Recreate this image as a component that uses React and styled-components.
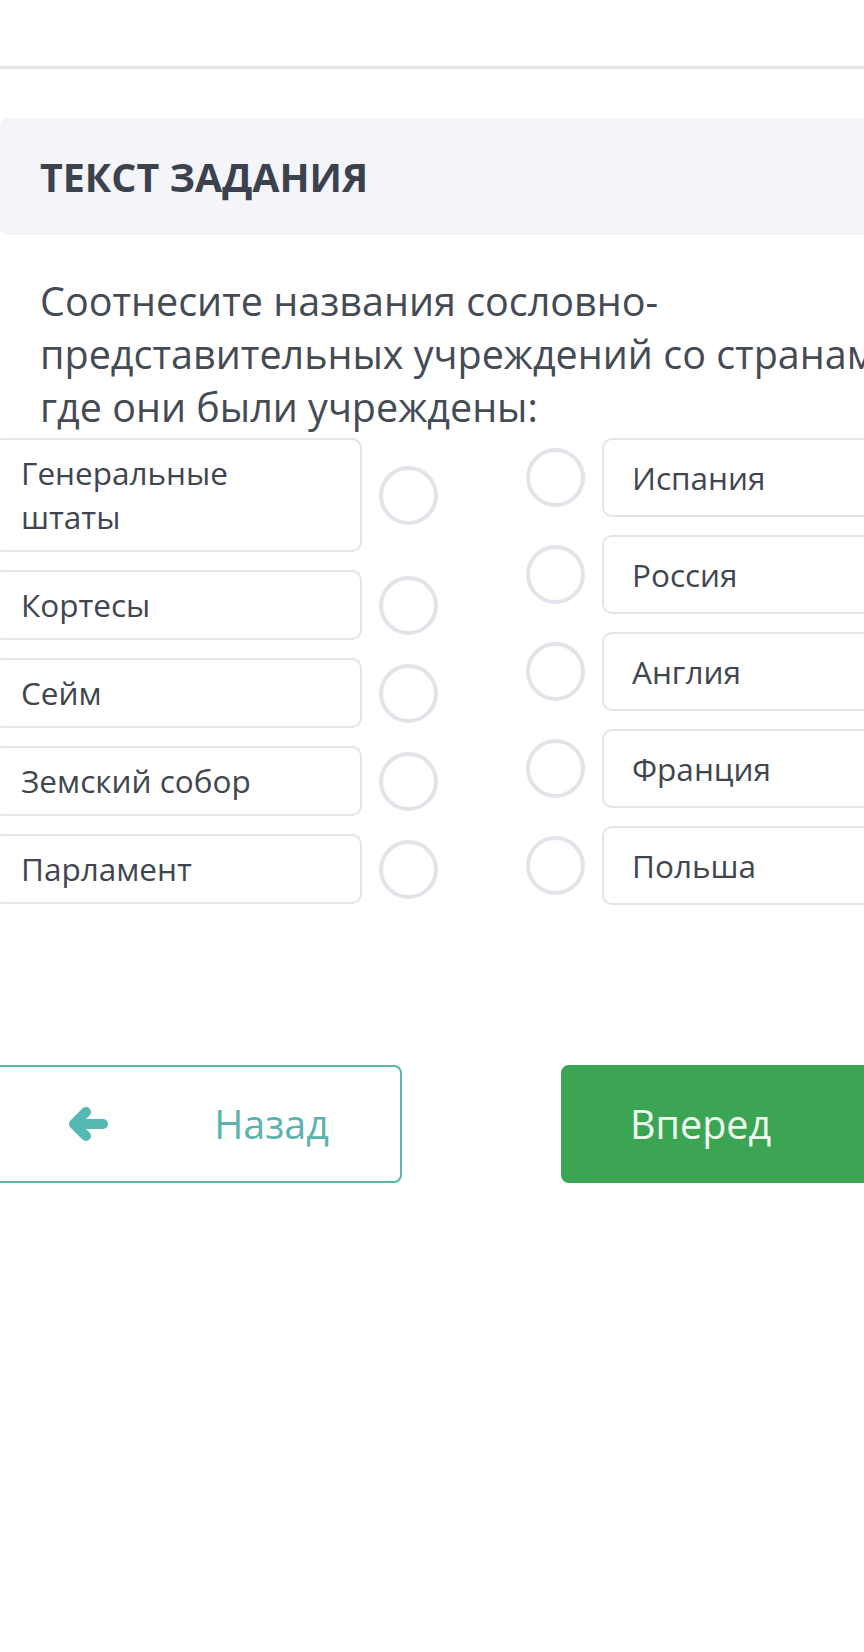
import * as React from 'react';
import styled, { createGlobalStyle } from 'styled-components';

const GlobalStyle = createGlobalStyle`
  body {
    margin: 0;
    background: #ffffff;
    font-family: "Open Sans", "Noto Sans", sans-serif;
  }
`;

const Page = styled.div`
  width: 864px;
  height: 1652px;
  overflow: hidden;
  background: #ffffff;
`;

const TopBar = styled.div`
  height: 66px;
  border-bottom: 3px solid #e5e5e5;
`;

const Content = styled.main`
  width: 972px;
  padding-top: 49px;
`;

const TaskHeader = styled.div`
  display: flex;
  align-items: center;
  height: 117px;
  padding-left: 40px;
  background: #f3f5f8;
  border-radius: 8px;
`;

const TaskTitle = styled.h2`
  margin: 0;
  font-size: 39.4px;
  font-weight: 700;
  color: #3b424d;
`;

const Question = styled.p`
  width: 900px;
  margin: 40px 0 0 40px;
  font-size: 39.5px;
  line-height: 53px;
  color: #444b55;
`;

const MatchGrid = styled.div`
  display: grid;
  grid-template-columns: 445px 445px;
  column-gap: 88px;
  align-items: start;
  margin: 4px 0 0 -7px;
`;

const Column = styled.div`
  display: flex;
  flex-direction: column;
  gap: 18px;
`;

const Row = styled.div`
  display: flex;
  align-items: center;
  gap: 17px;
`;

const Option = styled.div`
  box-sizing: border-box;
  width: 369px;
  flex: none;
  padding: ${(p) => (p.$right ? '15.5px 28px' : '11px 28px 11px 26px')};
  border: 2px solid #e2e5e8;
  border-radius: 10px;
  font-size: 31.5px;
  line-height: 44px;
  color: #3f4650;
`;

const Dot = styled.span`
  box-sizing: border-box;
  flex: none;
  width: 59px;
  height: 59px;
  border: 4px solid #e1e5e9;
  border-radius: 50%;
`;

const Nav = styled.div`
  display: flex;
  gap: 159px;
  margin: 160px 0 0 -7px;
`;

const NavButton = styled.button`
  box-sizing: border-box;
  display: flex;
  align-items: center;
  justify-content: ${(p) => (p.$primary ? 'flex-start' : 'space-between')};
  width: 409px;
  height: 118px;
  padding: ${(p) => (p.$primary ? '0 0 0 67px' : '0 71px 0 73px')};
  border: 2px solid ${(p) => (p.$primary ? '#3ba553' : '#5cb6b0')};
  border-radius: 8px;
  background: ${(p) => (p.$primary ? '#3ba553' : '#ffffff')};
  color: ${(p) => (p.$primary ? '#eefbee' : '#5ab3ac')};
  font-family: "Open Sans", "Noto Sans", sans-serif;
  font-size: 39.5px;
  cursor: pointer;
`;

const left = ['Генеральные штаты', 'Кортесы', 'Сейм', 'Земский собор', 'Парламент'];
const right = ['Испания', 'Россия', 'Англия', 'Франция', 'Польша'];

function ArrowLeft() {
  return (
    <svg width="40" height="36" viewBox="0 0 40 36">
      <g fill="none" stroke="#55b8b3" strokeWidth="10" strokeLinecap="round" strokeLinejoin="round">
        <path d="M35 18H8" />
        <path d="M18 6L6 18l12 12" />
      </g>
    </svg>
  );
}

export default function App() {
  return (
    <Page>
      <GlobalStyle />
      <TopBar />
      <Content>
        <TaskHeader>
          <TaskTitle>ТЕКСТ ЗАДАНИЯ</TaskTitle>
        </TaskHeader>
        <Question>
          Соотнесите названия сословно-представительных учреждений со странами, где они были учреждены:
        </Question>
        <MatchGrid>
          <Column>
            {left.map((item) => (
              <Row key={item}>
                <Option>{item}</Option>
                <Dot />
              </Row>
            ))}
          </Column>
          <Column>
            {right.map((item) => (
              <Row key={item}>
                <Dot />
                <Option $right>{item}</Option>
              </Row>
            ))}
          </Column>
        </MatchGrid>
        <Nav>
          <NavButton>
            <ArrowLeft />
            <span>Назад</span>
          </NavButton>
          <NavButton $primary>Вперед</NavButton>
        </Nav>
      </Content>
    </Page>
  );
}
